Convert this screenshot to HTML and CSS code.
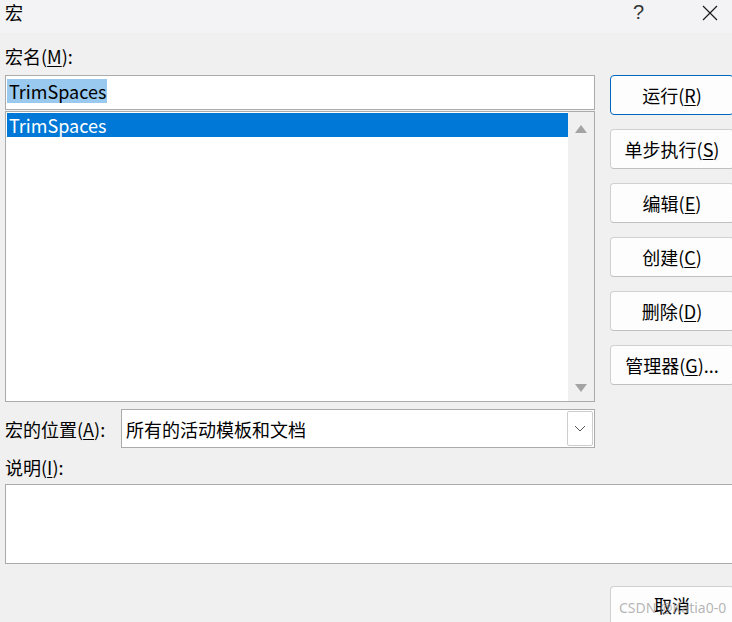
FILE: index.html
```html
<!DOCTYPE html>
<html lang="zh-CN">
<head>
<meta charset="utf-8">
<title>宏</title>
<link rel="stylesheet" href="styles.css">
</head>
<body>
<div class="window">
  <div class="titlebar">
    <div class="title">宏</div>
    <div class="title-actions">
      <span class="help">?</span>
      <svg class="close" width="16" height="16" viewBox="0 0 16 16"><path d="M1 1 L15 15 M15 1 L1 15" stroke="#1a1a1a" stroke-width="1.2" fill="none"/></svg>
    </div>
  </div>
  <div class="content">
    <div class="label label-name">宏名(<u>M</u>):</div>
    <div class="main">
      <div class="left">
        <div class="name-input"><span class="sel">TrimSpaces</span></div>
        <div class="list">
          <div class="list-items">
            <div class="item selected">TrimSpaces</div>
          </div>
          <div class="scrollbar">
            <svg width="12" height="8" viewBox="0 0 12 8"><path d="M6 0 L12 8 L0 8 Z" fill="#a3a3a3"/></svg>
            <svg width="12" height="8" viewBox="0 0 12 8"><path d="M0 0 L12 0 L6 8 Z" fill="#a3a3a3"/></svg>
          </div>
        </div>
        <div class="loc-row">
          <div class="label">宏的位置(<u>A</u>):</div>
          <div class="combo">
            <span class="combo-text">所有的活动模板和文档</span>
            <span class="combo-btn"><svg width="12" height="7" viewBox="0 0 12 7"><path d="M1 1 L6 6 L11 1" stroke="#555" stroke-width="1" fill="none"/></svg></span>
          </div>
        </div>
      </div>
      <div class="buttons">
        <div class="btn default">运行(<u>R</u>)</div>
        <div class="btn">单步执行(<u>S</u>)</div>
        <div class="btn">编辑(<u>E</u>)</div>
        <div class="btn">创建(<u>C</u>)</div>
        <div class="btn">删除(<u>D</u>)</div>
        <div class="btn">管理器(<u>G</u>)...</div>
      </div>
    </div>
    <div class="label label-desc">说明(<u>I</u>):</div>
    <div class="desc"></div>
    <div class="bottom">
      <div class="btn cancel">取消</div>
    </div>
  </div>
  <div class="watermark">CSDN @Katia0-0</div>
</div>
</body>
</html>
```
FILE: styles.css
```css
html, body {
  margin: 0;
  padding: 0;
}
body {
  width: 732px;
  height: 622px;
  overflow: hidden;
  background: #f0f0f0;
  font-family: "Noto Sans CJK SC", "Noto Sans", sans-serif;
  font-size: 18px;
  color: #000;
}
.window {
  position: relative;
  width: 732px;
  height: 622px;
  overflow: hidden;
}
.titlebar {
  height: 33px;
  background: #f3f3f6;
  display: flex;
  justify-content: space-between;
}
.title {
  padding-left: 5px;
  line-height: 24px;
  font-size: 18px;
}
.title-actions {
  display: flex;
  align-items: flex-start;
  padding-top: 1px;
}
.help {
  font-family: "Liberation Sans", sans-serif;
  font-size: 20px;
  line-height: 22px;
  color: #333;
  margin-right: 58px;
}
.close {
  margin-right: 14px;
  margin-top: 4px;
}
.content {
  padding-left: 5px;
}
u {
  text-decoration-thickness: 1px;
  text-underline-offset: 2px;
}
.label {
  line-height: 24px;
  white-space: nowrap;
}
.label-name {
  margin-top: 11px;
  height: 31px;
}
.main {
  display: flex;
}
.left {
  width: 590px;
  flex-shrink: 0;
  display: flex;
  flex-direction: column;
}
.name-input {
  border: 1px solid #ababab;
  background: #fff;
  padding: 2px 0 0 1px;
  box-sizing: content-box;
  height: 31px;
}
.sel {
  display: inline-block;
  background: #99c9ef;
  line-height: 24px;
  padding: 0 1px 0 2px;
}
.list {
  margin-top: 1px;
  height: 289px;
  border: 1px solid #ababab;
  background: #fff;
  display: flex;
}
.list-items {
  flex: 1;
  padding: 1px 0 0 1px;
}
.item {
  height: 24px;
  line-height: 24px;
  padding-left: 2px;
}
.item.selected {
  background: #0078d7;
  color: #fff;
}
.scrollbar {
  width: 26px;
  background: #f0f0f0;
  display: flex;
  flex-direction: column;
  justify-content: space-between;
  align-items: center;
  padding: 13px 0 9px;
}
.loc-row {
  margin-top: 7px;
  display: flex;
  align-items: center;
}
.loc-row .label {
  width: 116px;
}
.combo {
  flex: 1;
  height: 37px;
  border: 1px solid #ababab;
  background: #fff;
  display: flex;
  align-items: center;
  justify-content: space-between;
}
.combo-text {
  padding-left: 4px;
}
.combo-btn {
  width: 24px;
  height: 33px;
  margin-right: 1px;
  border: 1px solid #cdcdcd;
  border-radius: 2px;
  display: flex;
  align-items: center;
  justify-content: center;
}
.buttons {
  margin-left: 15px;
  flex-shrink: 0;
  display: flex;
  flex-direction: column;
  gap: 14px;
}
.btn {
  width: 122px;
  height: 38px;
  border: 1px solid #d0d0d0;
  border-bottom-color: #c0c0c0;
  border-radius: 4px;
  background: #fdfdfd;
  display: flex;
  align-items: center;
  justify-content: center;
  line-height: 24px;
  white-space: nowrap;
  box-sizing: content-box;
}
.btn.default {
  border-color: #0067c0;
}
.label-desc {
  margin-top: 7px;
  height: 29px;
}
.desc {
  width: 740px;
  height: 78px;
  border: 1px solid #ababab;
  background: #fff;
}
.bottom {
  margin-top: 22px;
  padding-left: 605px;
}
.cancel {
  height: 44px;
  align-items: flex-start;
  padding-top: 6px;
}
.watermark {
  position: absolute;
  left: 619px;
  top: 598px;
  font-family: "Noto Sans", sans-serif;
  font-size: 14px;
  color: rgba(150, 150, 150, 0.7);
  white-space: nowrap;
}
```
